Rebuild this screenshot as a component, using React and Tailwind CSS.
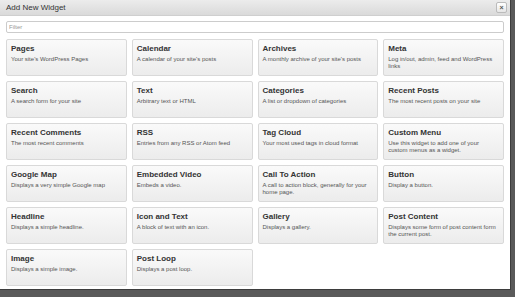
import React from 'react';

const widgets = [
  ['Pages', "Your site's WordPress Pages"],
  ['Calendar', "A calendar of your site's posts"],
  ['Archives', "A monthly archive of your site's posts"],
  ['Meta', 'Log in/out, admin, feed and WordPress links'],
  ['Search', 'A search form for your site'],
  ['Text', 'Arbitrary text or HTML'],
  ['Categories', 'A list or dropdown of categories'],
  ['Recent Posts', 'The most recent posts on your site'],
  ['Recent Comments', 'The most recent comments'],
  ['RSS', 'Entries from any RSS or Atom feed'],
  ['Tag Cloud', 'Your most used tags in cloud format'],
  ['Custom Menu', 'Use this widget to add one of your custom menus as a widget.'],
  ['Google Map', 'Displays a very simple Google map'],
  ['Embedded Video', 'Embeds a video.'],
  ['Call To Action', 'A call to action block, generally for your home page.'],
  ['Button', 'Display a button.'],
  ['Headline', 'Displays a simple headline.'],
  ['Icon and Text', 'A block of text with an icon.'],
  ['Gallery', 'Displays a gallery.'],
  ['Post Content', 'Displays some form of post content form the current post.'],
  ['Image', 'Displays a simple image.'],
  ['Post Loop', 'Displays a post loop.'],
];

function WidgetCard({ title, desc }) {
  return (
    <div className="h-[37px] rounded-[2px] border border-[#d9d9d9] bg-gradient-to-b from-[#fafafa] to-[#ececec] px-[4px] pt-[4px]">
      <div className="text-[8px] font-bold leading-[10px] text-[#333]">{title}</div>
      <div className="mt-[2px] text-[6px] leading-[7px] text-[#555]">{desc}</div>
    </div>
  );
}

export default function App() {
  return (
    <div className="w-[515px] h-[297px] bg-[#5a5a5a] overflow-hidden" style={{ fontFamily: '"Liberation Sans", Arial, sans-serif' }}>
      <div className="w-[511px] h-[290px] bg-white border-r border-b border-[#3d3d3d] flex flex-col">
        <div className="h-[16px] flex items-center justify-between pl-[6px] pr-[3px] bg-gradient-to-b from-[#ececec] to-[#dadada] border-b border-[#cfcfcf]">
          <span className="text-[8px] text-[#333]">Add New Widget</span>
          <button className="w-[11px] h-[11px] flex items-center justify-center rounded-[2px] border border-[#bbb] bg-gradient-to-b from-white to-[#e6e6e6] text-[7px] leading-none font-bold text-[#555]">
            ×
          </button>
        </div>
        <div className="px-[6px] pt-[5px]">
          <input
            type="text"
            placeholder="Filter"
            className="block w-full h-[12px] border border-[#ccc] rounded-[2px] px-[2px] text-[6px] text-[#333] placeholder:text-[#999] outline-none"
          />
          <div className="grid grid-cols-4 gap-x-[5px] gap-y-[5px] mt-[6px]">
            {widgets.map(([t, d]) => (
              <WidgetCard key={t} title={t} desc={d} />
            ))}
          </div>
        </div>
      </div>
    </div>
  );
}
